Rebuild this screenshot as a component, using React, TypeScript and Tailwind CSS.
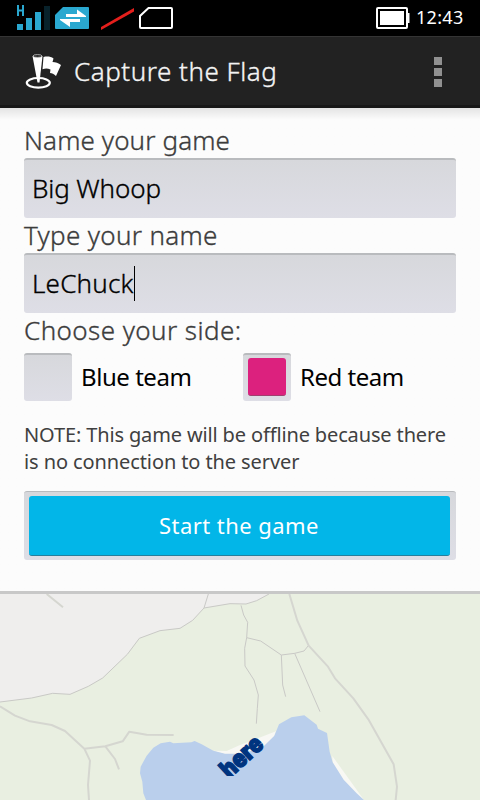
import React from "react";

function StatusBar() {
  return (
    <div className="flex h-9 shrink-0 items-start bg-black text-white">
      <svg width="240" height="36" viewBox="0 0 240 36">
        <g fill="#2aa8d0">
          <path d="M17 5h2v4.500h3V5h2v11h-2v-4.500h-3V16h-2z" />
          <path d="M17 24h6v6h-6zM26 18h6v12h-6zM35 12h6v18h-6z" />
          <path d="M44 6h6v24h-6z" fill="#08222b" />
          <path d="M63 7h25q1 0 1 1v20q0 1-1 1H56q-1 0-1-1V15z" />
        </g>
        <path d="M66 14h11V9.500L86 16v1H66zM60 19h20v3H70v5l-10-7z" fill="#fff" />
        <path d="M101 27L134 8v3.500L101 30z" fill="#e41f1c" />
        <path d="M148.500 8H171q1 0 1 1v18q0 1-1 1h-30q-1 0-1-1V16z" fill="none" stroke="#fff" strokeWidth="2" />
      </svg>
      <svg width="176" height="36" viewBox="240 0 176 36">
        <rect x="377" y="8" width="30" height="20" rx="1" fill="none" stroke="#fff" strokeWidth="2" />
        <path d="M380 11h24v14h-24zM408 13h1.500v10H408z" fill="#fff" />
      </svg>
      <span className="mt-[4px] text-[18px] leading-[27px] tracking-[0.3px]">12:43</span>
    </div>
  );
}

function FlagIcon() {
  return (
    <svg width="38" height="36" viewBox="0 0 38 36">
      <ellipse cx="14.300" cy="28.800" rx="11.500" ry="4.800" fill="none" stroke="#fff" strokeWidth="2.200" />
      <path d="M8.500 2L13.500 28.500h2L18.500 2z" fill="#fff" />
      <ellipse cx="13.500" cy="2" rx="4.500" ry="1.400" fill="#222" stroke="#ccc" strokeWidth=".8" />
      <path d="M19.500 3C23 2.200 27 2.500 29.500 4.500L28.500 8c3 0 6 1 8.500 3L32 22c-2-2-4-2.700-6-3l.5-3.500c-3-1.300-5-1.300-8-.3z" fill="#fff" />
    </svg>
  );
}

function TitleBar() {
  return (
    <header className="flex h-[72px] shrink-0 items-center border-t border-b-[3px] border-t-[#343434] border-b-[#181818] bg-[#222] pt-[2px] pr-[38px] pl-6">
      <FlagIcon />
      <h1 className="-mt-[2px] ml-[12px] flex-1 text-[26px] leading-9 font-light tracking-[0.52px] whitespace-nowrap text-[#f4f4f4] [-webkit-text-stroke:0.35px]">
        Capture the Flag
      </h1>
      <div className="flex flex-col gap-[3px]">
        <i className="size-2 bg-[#919191]" />
        <i className="size-2 bg-[#919191]" />
        <i className="size-2 bg-[#919191]" />
      </div>
    </header>
  );
}

const well = "rounded-[3px] border-t-2 border-[#b9bbbe] bg-linear-to-b from-[#d7d8dc] to-[#dedee6]";
const light = "font-light [-webkit-text-stroke:0.35px]";

function GameForm() {
  return (
    <main className="flex h-[486px] shrink-0 flex-col border-b-[3px] border-[#c8c8c8] bg-[#fcfcfc] bg-linear-to-b from-[#e4e4e4] via-[#fcfcfc] via-[12px] to-[#fcfcfc] px-6 pt-[15px] whitespace-nowrap">
      <label className={`h-[35px] text-[26px] leading-[35px] tracking-[0.12px] text-[#3c3c3c] ${light}`}>Name your game</label>
      <div className={`flex h-[60px] items-center px-2 pb-[2px] text-[26px] text-black ${well}`}>
        <span className={`tracking-[-0.12px] ${light}`}>Big Whoop</span>
      </div>
      <label className={`h-[35px] text-[26px] leading-[35px] tracking-[0.32px] text-[#3c3c3c] ${light}`}>Type your name</label>
      <div className={`flex h-[60px] items-center px-2 pb-[2px] text-[26px] text-black ${well}`}>
        <span className={`tracking-[0.2px] ${light}`}>LeChuck</span>
        <i className="h-[35px] w-px bg-black" />
      </div>
      <div className={`h-10 text-[26px] leading-[35px] tracking-[0.43px] text-[#3c3c3c] ${light}`}>Choose your side:</div>
      <div className="flex h-12 items-center text-[24px] text-black">
        <div className="flex w-[219px] items-center gap-[9px]">
          <div className={`size-12 ${well}`} />
          <span className="tracking-[-0.45px]">Blue team</span>
        </div>
        <div className="flex items-center gap-[9px]">
          <div className={`flex size-12 items-center justify-center pb-[3px] ${well}`}>
            <div className="h-[38px] w-[38px] rounded-[3px] border-b border-[#a04070] bg-[#dc217e]" />
          </div>
          <span className="tracking-[-0.5px]">Red team</span>
        </div>
      </div>
      <p className="mt-5 text-[20px] leading-[27px] text-[#404040]">
        <span className="tracking-[-0.14px]">NOTE: This game will be offline because there</span>
        <br />
        <span className="tracking-[-0.1px]">is no connection to the server</span>
      </p>
      <div className="mt-4 h-[69px] rounded-[3px] border-t border-[#b9bbbe] bg-linear-to-b from-[#d7d8dc] to-[#dedee6] pt-1 pr-[6px] pl-[5px]">
        <button className="block h-[60px] w-full rounded-[3px] border-b border-[#277f9d] bg-[#02b6e8] pr-px text-center text-[22px] leading-[59px] tracking-[0.45px] text-white">
          Start the game
        </button>
      </div>
    </main>
  );
}

function GameMap() {
  return (
    <svg className="block shrink-0" width="480" height="206" viewBox="0 27 1440 618">
      <clipPath id="tile">
        <rect y="27" width="1440" height="546" />
      </clipPath>
      <rect y="27" width="1440" height="618" fill="#e9efe1" />
      <path d="M0 27H807L770 47L738 57L690 56L612 69L578 106L540 130L480 137L418 160L382 208L308 279L265 304L210 328L158 325L95 339L0 351z" fill="#efeeed" />
      <path d="M640 497L680 498L720 480L828 439L805 500L700 515zM997 513L1092 645L1000 600z" fill="#f8f8f4" />
      <path d="M438 645L430 625L427 590L420 565L422 545L440 512L460 488L482 475L510 470L520 475L574 472L584 468L605 478L640 497L675 506L720 506L785 490L823 452L837 418L874 397L913 391L950 419L954 431L981 444L989 500L998 532L1031 584L1070 625L1092 645z" fill="#bacfec" />
      <g fill="none" stroke="#c9c9c6" strokeWidth="3">
        <path d="M807 27L770 47L738 57L690 56L612 69L578 106L540 130L480 137L418 160L382 208L308 279L265 304L210 328L158 325L95 339L0 351M625 27L612 69M723 61L731 90L743 112L740 158L734 190L735 243L762 285L775 330L772 370L769 416M740 158L782 168L844 210L884 205L912 198L925 182M844 210L848 300L857 335M884 205L960 380" />
      </g>
      <g fill="none" stroke="#d5d6d0" strokeWidth="6" strokeLinejoin="round">
        <path d="M140 27L189 67M0 364L45 392L90 409L155 420L195 438L253 491L270 527L264 600L267 645M253 491L316 484L368 469L388 440L440 449L521 450M316 484L345 522L357 553M868 27L892 107L926 182L984 245L1005 280L1060 340L1105 403L1181 538L1191 605L1187 645" />
      </g>
      <g clipPath="url(#tile)">
        <text transform="translate(688 583) rotate(-43)" fontFamily="Inter" fontWeight="900" fontSize="74" textLength="146" lengthAdjust="spacingAndGlyphs" fill="#00347f" stroke="#00347f" strokeWidth="4">here</text>
      </g>
    </svg>
  );
}

export default function App() {
  return (
    <div className="flex h-[800px] w-[480px] flex-col overflow-hidden bg-[#fcfcfc] font-['Noto_Sans','Open_Sans',sans-serif]">
      <StatusBar />
      <TitleBar />
      <GameForm />
      <GameMap />
    </div>
  );
}
